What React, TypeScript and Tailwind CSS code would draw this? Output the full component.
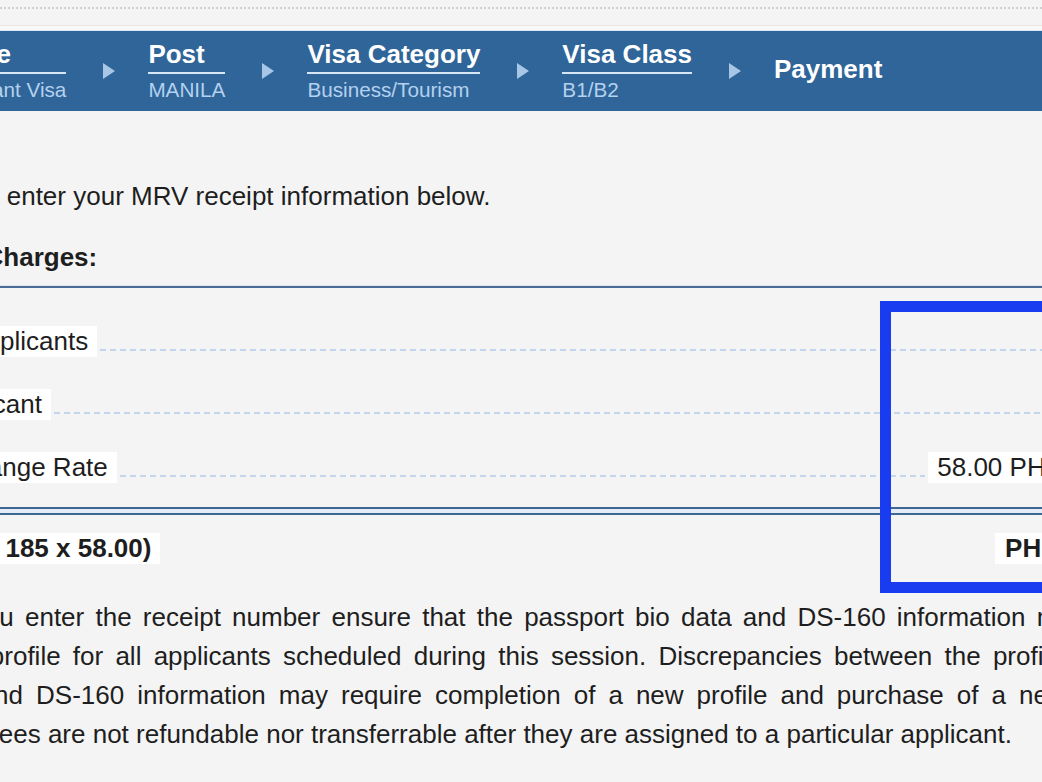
import { Fragment } from "react";

const steps = [
  { title: "Visa Type", sub: "Nonimmigrant Visa" },
  { title: "Post", sub: "MANILA" },
  { title: "Visa Category", sub: "Business/Tourism" },
  { title: "Visa Class", sub: "B1/B2" },
];

const rows = [
  { label: "Number of Applicants", value: "1", labelClass: "-ml-[168px]", rowClass: "" },
  { label: "Cost per Applicant", value: "185 USD", labelClass: "-ml-[178px]", rowClass: "" },
  { label: "Exchange Rate", value: "58.00 PHP", labelClass: "-ml-[79px]", rowClass: "pr-[119px]" },
];

function Arrow() {
  return (
    <span className="ml-[37px] mr-[33px] h-0 w-0 border-y-[8px] border-l-[12px] border-y-transparent border-l-[#a8c6e6]" />
  );
}

export default function App() {
  return (
    <div className="relative h-[782px] w-[1042px] overflow-hidden bg-[#f4f4f4] text-[26px] text-[#1e1e1e] [font-family:'Liberation_Sans',Arial,sans-serif]">
      {/* top strip */}
      <div className="h-[9px] border-b-2 border-dotted border-[#cfcfcf]" />
      <div className="h-[17px] border-b border-[#ebe4e2]" />
      <div className="h-[5px] border-b border-[#dbe7f3] bg-[#f7f9fb]" />

      {/* steps bar */}
      <div className="flex h-[80px] items-center bg-[#2f6598] text-white">
        <div className="-ml-[108px] flex items-center whitespace-nowrap">
          {steps.map((s) => (
            <Fragment key={s.title}>
              <div className="flex flex-col">
                <div className="border-b-2 border-[#d6e6f5] pb-[3px] text-[26px] font-bold leading-[29px]">{s.title}</div>
                <div className="mt-[4px] text-[20.7px] leading-[24px] text-[#b4d1ef]">{s.sub}</div>
              </div>
              <Arrow />
            </Fragment>
          ))}
          <div className="pb-1 text-[26px] font-bold leading-[29px]">Payment</div>
        </div>
      </div>

      <p className="-ml-[80px] mt-[66px] whitespace-nowrap leading-[39px]">
        Please enter your MRV receipt information below.
      </p>
      <h3 className="-ml-[80px] mt-[22px] whitespace-nowrap font-bold leading-[39px]">MRV Charges:</h3>
      <div className="mt-[8px] h-px bg-[#dfe6ee]" />
      <div className="h-[2px] bg-[#4a6b98]" />

      {/* charges */}
      <div className="flex w-[1191px] flex-col gap-[32px] pt-[38px]">
        {rows.map((r) => (
          <div key={r.label} className={`flex items-end ${r.rowClass}`}>
            <span className={`${r.labelClass} whitespace-nowrap bg-white px-[9px] leading-[31px]`}>{r.label}</span>
            <span className="mx-[3px] mb-[6px] h-[2px] flex-1 bg-[image:repeating-linear-gradient(90deg,#c3d5ea_0px,#c3d5ea_6px,transparent_6px,transparent_10px)]" />
            <span className="whitespace-nowrap bg-white px-[9px] leading-[31px]">{r.value}</span>
          </div>
        ))}
      </div>

      <div className="mt-[24px] h-[8px] border-y-2 border-[#3f6796] bg-[#e4ecf5]" />

      <div className="mt-[18px] flex w-[1191px] items-end font-bold">
        <span className="-ml-[123px] whitespace-nowrap bg-white px-[9px] leading-[31px]">Total (1 x 185 x 58.00)</span>
        <span className="flex-1" />
        <span className="whitespace-nowrap bg-white px-[10px] leading-[31px]">PHP 10,730.00</span>
      </div>

      <div className="mt-[34px] leading-[39px]">
        <div className="-ml-[116px] whitespace-nowrap [word-spacing:4px]">
          Before you enter the receipt number ensure that the passport bio data and DS-160 information match the
        </div>
        <div className="-ml-[73px] whitespace-nowrap [word-spacing:5px]">
          your profile for all applicants scheduled during this session. Discrepancies between the profile
        </div>
        <div className="-ml-[84px] whitespace-nowrap [word-spacing:5.8px]">
          data and DS-160 information may require completion of a new profile and purchase of a new MRV fee.
        </div>
        <div className="-ml-[73px] whitespace-nowrap">
          MRV fees are not refundable nor transferrable after they are assigned to a particular applicant.
        </div>
      </div>

      {/* highlight annotation */}
      <div className="absolute left-[880px] top-[301px] h-[292px] w-[220px] border-[11px] border-[#1a3cf0]" />
    </div>
  );
}
